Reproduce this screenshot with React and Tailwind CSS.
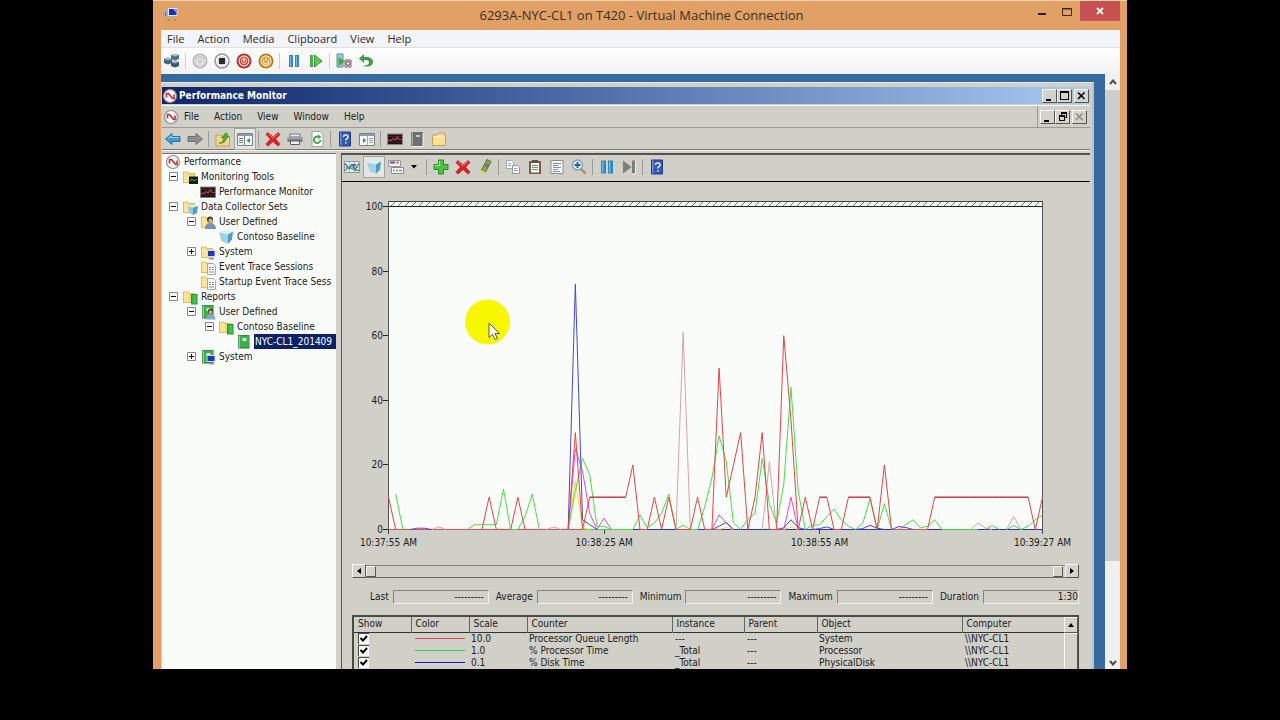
import { useState } from "react";

const Svg = ({ children, className = "w-4 h-4 shrink-0" }) => (
    <svg viewBox="0 0 16 16" className={className} aria-hidden="true">
        {children}
    </svg>
);

/* ---------- shared icon parts ---------- */

const FolderShape = () => (
    <>
        <path d="M1 2.500h5l1 1.500h6v10H1z" fill="#e3bd5c" />
        <path d="M2 3.500h3.600l1 1.500H12v8H2z" fill="#f8e49a" />
        <path d="M7 5h5v8.500H7z" fill="#f3d777" />
    </>
);

const BookShape = () => (
    <>
        <path d="M2 1h11.500v13.500H2z" fill="#1f7a31" />
        <path d="M4 1.500h9v12H4z" fill="#3fae4e" />
        <path d="M2.500 1.500h1.500v12.500H2.500z" fill="#8ad193" />
        <path d="M6.500 4h4v3h-4z" fill="#d9f2d6" />
    </>
);

const CubeShape = () => (
    <>
        <path d="M1 3.500l6-2.500 8 1.500-5 3z" fill="#d6eef5" />
        <path d="M1 3.500l9 2V15L3.500 12z" fill="#9fd3e4" />
        <path d="M10 5.500l5-3-1 8-4 4.500z" fill="#4c9fc0" />
    </>
);

const PageLines = () => (
    <>
        <path d="M2 1.500h12v13H2z" fill="#fbfbfb" stroke="#8b8d8f" />
        <path d="M4 4.500h8M4 6.500h5M4 8.500h8M4 10.500h5M4 12.500h7" stroke="#7d93ad" />
    </>
);

const icons = {
    connection: (
        <Svg>
            <path d="M5 1h9.500v8H5z" fill="#dfe6ee" />
            <path d="M6 2h7.500v6H6z" fill="#1c2fb4" />
            <path d="M10 2h3.500v4z" fill="#7f9af0" />
            <path d="M1 4h3v6H1z" fill="#9fb0bd" />
            <path d="M2 5h1v4H2z" fill="#5f7686" />
            <path d="M8 9h3v3H8z" fill="#a8adb2" />
            <path d="M4 13h9" stroke="#c08a2c" strokeWidth="1.500" />
            <path d="M7.500 12h3v2h-3z" fill="#d9b24b" />
        </Svg>
    ),
    ctrlAltDel: (
        <Svg>
            <path d="M7 2l4-1 4 1v4l-4 1.500L7 6z" fill="#4b7389" />
            <path d="M7 2l4 1.500L15 2l-4-1z" fill="#a9c6d3" />
            <path d="M0 6l4-1.500L8 6v4l-4 1.500L0 10z" fill="#3e6479" />
            <path d="M0 6l4 1.500L8 6 4 4.500z" fill="#9dbccb" />
            <path d="M7 9l4-1.500L15 9v4l-4 1.500L7 13z" fill="#35596d" />
            <path d="M7 9l4 1.500L15 9l-4-1.500z" fill="#a3c2cf" />
        </Svg>
    ),
    start: (
        <Svg>
            <circle cx="8" cy="8" r="7.500" fill="#b4b4b4" />
            <circle cx="8" cy="8" r="5.500" fill="#c9c9c9" stroke="#e9e9e9" />
            <path d="M6 6a3 3 0 1 0 4 0M8 4.500v3" fill="none" stroke="#f4f4f4" strokeWidth="1.200" />
        </Svg>
    ),
    turnOff: (
        <Svg>
            <circle cx="8" cy="8" r="7" fill="#fafafa" stroke="#949494" strokeWidth="1.500" />
            <circle cx="8" cy="8" r="5" fill="#dedede" />
            <path d="M5 5h6v6H5z" fill="#2b2b2b" />
        </Svg>
    ),
    shutDown: (
        <Svg>
            <circle cx="8" cy="8" r="7.500" fill="#b32c20" />
            <circle cx="8" cy="8" r="5" fill="#c94434" stroke="#f3cfc8" strokeWidth="1.300" />
            <path d="M8 4.800v4" stroke="#fff" strokeWidth="1.400" />
            <circle cx="8" cy="8" r="2.500" fill="none" stroke="#f3cfc8" />
        </Svg>
    ),
    save: (
        <Svg>
            <circle cx="8" cy="8" r="7.500" fill="#b9791c" />
            <circle cx="8" cy="8" r="5" fill="#d79c35" stroke="#f7e2b6" strokeWidth="1.300" />
            <path d="M6 7a2.500 2.500 0 1 0 4 0M8 5v3" fill="none" stroke="#fff4d8" strokeWidth="1.200" />
        </Svg>
    ),
    pause: (
        <Svg>
            <path d="M3 2h4v12H3zM9 2h4v12H9z" fill="#3a86c8" />
            <path d="M4 3h1v10H4zM10 3h1v10h-1z" fill="#7fb6e2" />
        </Svg>
    ),
    resume: (
        <Svg>
            <path d="M2 2h3v12H2z" fill="#4bb04b" />
            <path d="M6.500 2L14 8l-7.500 6z" fill="#62c455" stroke="#3a9a3a" />
        </Svg>
    ),
    snapshot: (
        <Svg>
            <path d="M1 1h6v13H1z" fill="#9fcadb" stroke="#5a8ba0" />
            <path d="M2.500 4L9 8.500 2.500 13z" fill="#3faa3f" />
            <path d="M9 7h6v7H9z" fill="#c9c3bb" stroke="#7b7468" />
            <circle cx="12" cy="10.500" r="1.800" fill="#fff" stroke="#6b4c38" />
        </Svg>
    ),
    revert: (
        <Svg>
            <path d="M6 1L1 5.500 6 10V7.200c4-.6 5.500 1 5 2.800-.5 1.800-3 2.500-6 3 5 1.500 9.500 0 10-3.800C15.400 5.500 11.500 3.400 6 4z" fill="#3f9d45" />
        </Svg>
    ),
    perfLogo: (
        <Svg>
            <circle cx="8" cy="8" r="6.500" fill="#f7f4f4" stroke="#8f8d92" strokeWidth="1.200" />
            <path d="M4.500 9.500V5.500l2 0 4 5h1.500V6.500" fill="none" stroke="#c0303a" strokeWidth="1.600" />
        </Svg>
    ),
    back: (
        <Svg>
            <path d="M.5 8L7 2.500V5.500h8v5H7v3z" fill="#3b9bdc" stroke="#2d6f9f" />
            <path d="M3 7.500L6.500 5v1.500H14" fill="none" stroke="#9ad3f5" />
        </Svg>
    ),
    forward: (
        <Svg>
            <path d="M15.500 8L9 2.500V5.500H1v5h8v3z" fill="#8a8d8f" stroke="#6d6f71" />
        </Svg>
    ),
    upLevel: (
        <Svg>
            <path d="M1 4h5l1 1.500h7.500V15H1z" fill="#f2d98a" stroke="#c4a152" />
            <path d="M4 12c3 0 4.500-2 5-5H6.500L11 1.500 14 6l-2.200.5C11 10.500 8 13 4 12z" fill="#4daf35" stroke="#2d7d22" strokeWidth=".6" />
        </Svg>
    ),
    consoleTree: (
        <Svg>
            <path d="M.5 2.500h15v12H.5z" fill="#f6f8fa" stroke="#7a828c" />
            <path d="M1 3h14v2H1z" fill="#8f9baa" />
            <path d="M2 7.500h4M2 9.500h4M2 11.500h4" stroke="#5f7da6" />
            <path d="M7.500 5v9" stroke="#7a828c" />
            <path d="M13 7v5l-3.500-2.500z" fill="#2f9a3a" />
        </Svg>
    ),
    actionPane: (
        <Svg>
            <path d="M.5 2.500h15v12H.5z" fill="#f6f8fa" stroke="#7a828c" />
            <path d="M1 3h14v2H1z" fill="#8f9baa" />
            <path d="M10 7.500h4M10 9.500h4M10 11.500h4" stroke="#8fa1b8" />
            <path d="M8.500 5v9" stroke="#a4abb3" />
            <path d="M4 7v5l3-2.500z" fill="#2f9a3a" />
        </Svg>
    ),
    remove: (
        <Svg>
            <path d="M3 1l5 4.500L13 1l2.500 2.500L11 8l4.500 5-2.500 2.500L8 11l-5 4.500L.5 13 5 8 .5 3.500z" fill="#d42427" />
            <path d="M3 2.500l5 4.500 5-4.500" fill="none" stroke="#f07f7b" />
        </Svg>
    ),
    printer: (
        <Svg>
            <path d="M3 3h10v3H3z" fill="#e8ecef" stroke="#74787c" />
            <path d="M.5 6h15v5H.5z" fill="#7a7f84" />
            <path d="M1 6.500h14v1.500H1z" fill="#a9aeb2" />
            <path d="M3.500 10h9v3.500h-9z" fill="#f2f2f2" stroke="#5d6165" />
        </Svg>
    ),
    refreshPage: (
        <Svg>
            <path d="M3 .5h8l3 3v12H3z" fill="#fbfbfb" stroke="#a0a3a5" />
            <path d="M11.500 9A3.300 3.300 0 1 1 9.500 5.800" fill="none" stroke="#3fa447" strokeWidth="1.800" />
            <path d="M9 3.500l3.500 2.500L9 8z" fill="#3fa447" />
        </Svg>
    ),
    help: (
        <Svg>
            <path d="M2.500 1h11v14h-11z" fill="#3656b8" stroke="#223a8a" />
            <path d="M3 1.500h1.500v13H3z" fill="#6f8be0" />
            <path d="M6.500 6C6.500 3.200 11 3.200 11 6c0 1.800-2.200 1.800-2.200 3.500M8.800 11v1.500" fill="none" stroke="#fff" strokeWidth="1.400" />
        </Svg>
    ),
    perfScreen: (
        <Svg>
            <path d="M0 2.500h16v11.500H0z" fill="#8b8486" />
            <path d="M1 3.500h14v9.500H1z" fill="#1d1416" />
            <path d="M1 5.500h14M1 8.500h14M1 11h14" stroke="#4c3a3d" strokeWidth=".6" />
            <path d="M1 9.500h3l2-2 2 1.500 2.500-3 2 2.500H15" fill="none" stroke="#d2323d" strokeWidth="1.200" />
        </Svg>
    ),
    grayBook: (
        <Svg>
            <path d="M2 1h12v14H2z" fill="#6f6f6f" />
            <path d="M2.500 1.500h1.500v13H2.500z" fill="#a5a5a5" />
            <path d="M7 4h4v2H7z" fill="#c7c7c7" />
            <path d="M14 2v13.500H3" fill="none" stroke="#efefec" />
        </Svg>
    ),
    newFolder: (
        <Svg>
            <path d="M1.500 4h5l1-2h6v2h1v10.500h-13z" fill="#f7e196" stroke="#caa24a" />
            <path d="M2.500 6h11" stroke="#fdf4cd" />
        </Svg>
    ),
    currentActivity: (
        <Svg>
            <path d="M.5 2.500h15v11H.5z" fill="#eef3f7" stroke="#8b97a3" />
            <path d="M5.500 3v10M10.500 3v10M1 8.500h14" stroke="#a9b8c7" />
            <path d="M1 4.500l4 5 3-4 3 5 4-6" fill="none" stroke="#2e67b4" strokeWidth="1.300" />
            <path d="M1 11.500l4-3 5 2 5 1" fill="none" stroke="#3fa447" strokeWidth="1.300" />
            <path d="M9 5h3v2H9z" fill="#c2484c" />
        </Svg>
    ),
    cube: <Svg><CubeShape /></Svg>,
    graphType: (
        <Svg>
            <path d="M.5 1.500h12v6H.5z" fill="#f3f1f5" stroke="#9a98a0" />
            <path d="M2 3.500h5" stroke="#7a4a8a" strokeWidth="2" />
            <path d="M8.500 3.500h2" stroke="#c34d55" strokeWidth="2" />
            <path d="M3.500 8.500h12v6h-12z" fill="#f7f7f7" stroke="#8b8d92" />
            <path d="M5 11.500h2M8 11.500h2M11 11.500h3" stroke="#9aa3ae" strokeWidth="2" />
        </Svg>
    ),
    add: (
        <Svg>
            <path d="M5.500 1h5v4.500H15v5h-4.500V15h-5v-4.500H1v-5h4.500z" fill="#4fc043" stroke="#2b8a2b" />
            <path d="M6.500 2v4.500H2" fill="none" stroke="#a8e69a" />
        </Svg>
    ),
    highlight: (
        <Svg>
            <path d="M10 .5l4 2-5.500 10.500-4-2z" fill="#9aa83c" stroke="#5d6a34" />
            <path d="M9.500 4l3 1.500-2 3.500-3-1.500z" fill="#5a7fa0" />
            <path d="M4.500 11l4 2-4.500 2.500z" fill="#d6da48" />
        </Svg>
    ),
    copy: (
        <Svg>
            <path d="M1.500 1.500h5l2 2v6h-7z" fill="#fafafa" stroke="#a1a9b5" />
            <path d="M7.500 6.500h5l2 2v6h-7z" fill="#fafafa" stroke="#8d9bb0" />
            <path d="M3 4.500h3M3 6.500h3M9 9.500h3M9 11.500h4" stroke="#93a7c4" />
        </Svg>
    ),
    paste: (
        <Svg>
            <path d="M2 2h12v13H2z" fill="#7c5a3a" />
            <path d="M4 4h8v9.500H4z" fill="#fbfbfb" />
            <path d="M5 1h6v2.500H5z" fill="#55514c" />
            <path d="M5 6.500h6M5 8.500h6M5 10.500h6" stroke="#7f8790" />
        </Svg>
    ),
    properties: <Svg><PageLines /></Svg>,
    zoom: (
        <Svg>
            <path d="M9.500 9.500l5 5" stroke="#c08a66" strokeWidth="2.500" />
            <circle cx="6.500" cy="6" r="5" fill="#e2f0fb" stroke="#7d9cc0" strokeWidth="1.300" />
            <path d="M6.500 3v6M3.500 6h6" stroke="#2b5ea8" strokeWidth="2" />
        </Svg>
    ),
    freeze: (
        <Svg>
            <path d="M2 1.500h5v13H2zM9 1.500h5v13H9z" fill="#2d86bd" />
            <path d="M3 2.500h1.500v11H3zM10 2.500h1.500v11H10z" fill="#6fb9e0" />
        </Svg>
    ),
    step: (
        <Svg>
            <path d="M2 1.500L10.500 8 2 14.500zM11 1.500h3v13h-3z" fill="#7c7e7c" />
            <path d="M14.500 2v13H11" fill="none" stroke="#efefec" />
        </Svg>
    ),
    folderPerf: (
        <Svg>
            <FolderShape />
            <path d="M7 7.500h9V15H7z" fill="#13201a" />
            <path d="M8 12l2-2 2 2 3-2" fill="none" stroke="#49b04f" />
        </Svg>
    ),
    folderCube: (
        <Svg>
            <FolderShape />
            <path d="M6 7l5-1 5 1-5 1.800z" fill="#d6eef5" />
            <path d="M6 7l5 1.800V16l-4-2z" fill="#8fcbe0" />
            <path d="M11 8.800L16 7l-1 7-4 2z" fill="#4c9fc0" />
        </Svg>
    ),
    folderUser: (
        <Svg>
            <FolderShape />
            <circle cx="10" cy="5.500" r="3" fill="#3b3a2c" />
            <circle cx="10.500" cy="6.500" r="2" fill="#d9ad7c" />
            <path d="M5 15c0-4 2-6 5-6s6 2 6 6z" fill="#7d93b3" />
        </Svg>
    ),
    folderSystem: (
        <Svg>
            <FolderShape />
            <path d="M7 6h8.500v7H7z" fill="#d4dae2" />
            <path d="M8 7h6.500v5H8z" fill="#1c37b8" />
            <path d="M9 14h5v1.500H9z" fill="#8f979f" />
        </Svg>
    ),
    folderTrace: (
        <Svg>
            <FolderShape />
            <path d="M7.500 4.500h6l2 2v9h-8z" fill="#f9f9f9" stroke="#a9a9a3" />
            <path d="M9 8.500h2M12 8.500h2M9 10.500h2M12 10.500h2M9 13h5" stroke="#8b8b96" />
        </Svg>
    ),
    folderReport: (
        <Svg>
            <FolderShape />
            <path d="M9 5h6.500v10.500H9z" fill="#1f9a35" />
            <path d="M10.500 6h4v8.500h-4z" fill="#45c052" />
        </Svg>
    ),
    report: <Svg><BookShape /></Svg>,
    reportUser: (
        <Svg>
            <BookShape />
            <circle cx="10.500" cy="7" r="2.500" fill="#4a3a2a" />
            <circle cx="10.500" cy="8" r="1.700" fill="#d9ad7c" />
            <path d="M6 15.500c0-4 2-5 4.500-5s5 1 5 5z" fill="#8ba4c6" />
        </Svg>
    ),
    reportSystem: (
        <Svg>
            <BookShape />
            <path d="M6.500 6h9v7h-9z" fill="#d4dae2" />
            <path d="M7.500 7h7v5h-7z" fill="#1c37b8" />
            <path d="M9 14h5v1.500H9z" fill="#8f979f" />
        </Svg>
    ),
};

/* ---------- toolbars ---------- */

const Divider = ({ className }) => <span className={`-ml-px w-px h-4 shrink-0 ${className}`} />;

function ToolBar({ label, items, className, divider }) {
    return (
        <div role="toolbar" aria-label={label} className={`flex items-center gap-1.5 ${className}`}>
            {items.map((item, i) => {
                if (item === "|") return <Divider key={i} className={divider} />;
                if (item === "v") {
                    return (
                        <button key={i} type="button" aria-label="Graph type list" className="-ml-px w-3 h-4 pl-0.5">
                            <svg viewBox="0 0 6 4" className="w-1.5 h-1"><path d="M0 0h6L3 3.500z" /></svg>
                        </button>
                    );
                }
                const pressed = item.startsWith("*");
                const name = pressed ? item.slice(1) : item;
                return (
                    <button
                        key={i}
                        type="button"
                        aria-label={name}
                        aria-pressed={pressed}
                        className={
                            pressed
                                ? "bg-[#e4e6e3] ring-2 ring-[#e4e6e3] outline-1 outline-offset-2 outline-[#a3a49d]"
                                : ""
                        }
                    >
                        {icons[name]}
                    </button>
                );
            })}
        </div>
    );
}

function MenuBar({ items, className }) {
    return (
        <nav className={`flex items-center ${className}`}>
            {items.map((item) => (
                <button key={item} type="button">{item}</button>
            ))}
        </nav>
    );
}

const vmTools = ["ctrlAltDel", "|", "start", "turnOff", "shutDown", "save", "|", "pause", "resume", "|", "snapshot", "revert"];
const consoleTools = ["back", "forward", "|", "upLevel", "*consoleTree", "|", "remove", "printer", "refreshPage", "|", "help", "actionPane", "|", "perfScreen", "grayBook", "newFolder"];
const graphTools = ["currentActivity", "*cube", "graphType", "v", "|", "add", "remove", "highlight", "|", "copy", "paste", "properties", "zoom", "|", "freeze", "step", "|", "help"];

const raised = "bg-[#d4d3cb] border border-t-[#f6f6f2] border-l-[#f6f6f2] border-b-[#55554f] border-r-[#55554f]";
const sunken = "border border-t-[#85857d] border-l-[#85857d] border-b-[#f4f4ef] border-r-[#f4f4ef]";

const captionGlyphs = {
    Minimize: <path d="M3 9h5v2H3z" />,
    Maximize: <path d="M2 1h9v9H2zM3 3v6h7V3z" fillRule="evenodd" />,
    Restore: <path d="M5 1h6v6H9v3H3V4h2zM6 3v1h3v2h1V3zM4 6v3h4V6z" fillRule="evenodd" />,
    Close: <path d="M3 2.500l6.500 6.500M9.500 2.500L3 9" stroke="currentColor" strokeWidth="1.600" />,
};

function CaptionButton({ name, disabled }) {
    return (
        <button
            type="button"
            aria-label={name}
            disabled={disabled}
            className={`w-[15px] h-[14px] ${raised} ${name === "Close" ? "ml-0.5" : ""} ${disabled ? "text-[#8d8d85]" : "text-black"}`}
        >
            <svg viewBox="0 0 13 12" className="w-full h-full" fill="currentColor">{captionGlyphs[name]}</svg>
        </button>
    );
}

/* ---------- console tree ---------- */

const tree = [
    { level: 0, icon: "perfLogo", text: "Performance" },
    { level: 1, box: "-", icon: "folderPerf", text: "Monitoring Tools" },
    { level: 2, icon: "perfScreen", text: "Performance Monitor" },
    { level: 1, box: "-", icon: "folderCube", text: "Data Collector Sets" },
    { level: 2, box: "-", icon: "folderUser", text: "User Defined" },
    { level: 3, icon: "cube", text: "Contoso Baseline" },
    { level: 2, box: "+", icon: "folderSystem", text: "System" },
    { level: 2, icon: "folderTrace", text: "Event Trace Sessions" },
    { level: 2, icon: "folderTrace", text: "Startup Event Trace Sess" },
    { level: 1, box: "-", icon: "folderReport", text: "Reports" },
    { level: 2, box: "-", icon: "reportUser", text: "User Defined" },
    { level: 3, box: "-", icon: "folderReport", text: "Contoso Baseline" },
    { level: 4, icon: "report", text: "NYC-CL1_201409", selected: true },
    { level: 2, box: "+", icon: "reportSystem", text: "System" },
];

const indents = ["pl-[3px]", "pl-[7px]", "pl-[25px]", "pl-[43px]", "pl-[61px]"];

function TreeRow({ node }) {
    return (
        <li className={`flex items-center h-[15px] whitespace-nowrap ${indents[node.level]}`}>
            {node.level > 0 && (
                <span className="w-[9px] mr-1 shrink-0">
                    {node.box && (
                        <button type="button" aria-label={node.box === "-" ? "Collapse" : "Expand"} className="block">
                            <svg viewBox="0 0 9 9" className="w-[9px] h-[9px]">
                                <path d="M.5.5h8v8h-8z" fill="#fff" stroke="#8a8a8a" />
                                <path d={node.box === "-" ? "M2 4.500h5" : "M2 4.500h5M4.500 2v5"} stroke="#111" />
                            </svg>
                        </button>
                    )}
                </span>
            )}
            {icons[node.icon]}
            <span className={node.selected ? "flex-1 ml-0.5 pl-px h-[15px] leading-[15px] bg-[#0b2268] text-white" : "ml-[3px]"}>
                {node.text}
            </span>
        </li>
    );
}

/* ---------- graph ---------- */

// plot area inside the graph drawing
const LEFT = 46;
const RIGHT = 700;
const TOP = 24;
const BOTTOM = 347;
const SAMPLES = 91;

const px = (i) => LEFT + 0.5 + ((RIGHT - LEFT) * i) / SAMPLES;
const py = (v) => BOTTOM + 0.5 - ((BOTTOM - TOP) * v) / 100;

// each run is [first sample, values...]
const series = [
    {
        color: "#d9a3ab",
        runs: [[6, 0, 0.8, 0], [22, 0, 0.8, 0], [40, 0, 61, 0], [52, 0, 21, 0], [81, 0, 2, 0.5, 0], [86, 0, 4, 0]],
    },
    { color: "#f2e21c", runs: [[25, 0, 15, 0.5, 0], [46, 0, 0.6, 0], [55, 0, 0.7, 0]] },
    {
        color: "#48e048",
        runs: [
            [1, 11, 0],
            [11, 0, 1.5, 1.5, 1.5, 1.5, 12.5, 0, 0, 4, 11, 0],
            [25, 0, 12, 22, 17, 1, 1, 0, 0, 0, 0, 4.5, 0.5, 2, 5, 11, 0, 1.3, 0, 0, 7, 16, 29, 21, 2, 0, 3, 5, 22, 8, 2, 14, 44, 12, 0, 1.3, 1.5, 4, 6.3, 3, 1, 0, 2, 9.5, 0, 8, 0],
            [71, 0, 1.5, 3, 0.5, 1, 3, 0],
            [83, 0, 1.2, 0],
            [86, 0, 1.2, 0, 1, 3, 4.5],
        ],
    },
    { color: "#ee44ee", runs: [[25, 0, 25, 18, 5, 0, 3.5, 0], [45, 0, 4.5, 2, 0], [55, 0, 10, 0]] },
    {
        color: "#4848d4",
        runs: [[3, 0, 0.4, 0.4, 0], [25, 0, 76, 3, 1.5, 0], [45, 0, 1, 2.2, 0], [54, 0, 0.5, 3, 0.6, 0], [59, 0, 0.3, 0.8, 0], [65, 0, 0.3, 1.3, 0.4, 0], [70, 0, 0.9, 0.6, 0]],
    },
    {
        color: "#e6454a",
        runs: [
            [0, 10, 0],
            [13, 0, 10, 0],
            [17, 0, 10, 0],
            [25, 0, 30, 0, 10, 10, 10, 10, 10, 10, 20, 0, 0, 10, 0, 10, 0, 0, 0, 10, 0, 0, 50, 10, 20, 30, 0, 10, 30, 0, 0, 60, 34, 0, 10, 0, 10, 10, 0, 0, 10, 10, 10, 10, 0, 20, 0],
            [75, 0, 10, 10, 10, 10, 10, 10, 10, 10, 10, 10, 10, 10, 10, 10, 0, 10],
        ],
    },
    {
        // level stretches of the queue length
        color: "#b0303a",
        runs: [[28, 10, 10, 10, 10, 10, 10], [60, 10, 10], [64, 10, 10, 10, 10], [76, 10, 10, 10, 10, 10, 10, 10, 10, 10, 10, 10, 10, 10, 10]],
    },
];

// what shows along the zero line: [from sample, to sample, colour]
const baseline = [
    [0, 27, "#ea4a50"],
    [27, 34, "#3fcf3f"],
    [34, 44, "#2f2fd0"],
    [44, 46, "#ea4a50"],
    [46, 53, "#2f2fd0"],
    [53, 55, "#ea4a50"],
    [55, 70, "#2f2fd0"],
    [70, 75, "#ea4a50"],
    [75, 77, "#2f2fd0"],
    [77, 82, "#3fcf3f"],
    [82, 91, "#2f2fd0"],
];

const times = [
    [0, "10:37:55 AM"],
    [30, "10:38:25 AM"],
    [60, "10:38:55 AM"],
    [91, "10:39:27 AM"],
];

function Graph() {
    return (
        <svg viewBox="0 0 748 378" className="block w-full" role="img" aria-label="Counter graph">
            <defs>
                <pattern id="hatch" width="7" height="5" patternUnits="userSpaceOnUse" y="19">
                    <path d="M0 5L5 0" stroke="#4a4a45" strokeWidth=".8" />
                </pattern>
            </defs>
            <rect x={LEFT} y="19" width={RIGHT - LEFT} height={BOTTOM - 19} fill="#fafcf9" />
            <rect x={LEFT} y="19" width={RIGHT - LEFT} height="5" fill="url(#hatch)" />
            <path d={`M${LEFT} 19.500H${RIGHT}`} stroke="#44443f" />
            <path d={`M41 24.500H${RIGHT}`} stroke="#22221f" />
            <path d={`M${LEFT}.5 19V352M${RIGHT}.5 19V352`} stroke="#55554f" />

            {[0, 20, 40, 60, 80, 100].map((v) => (
                <g key={v}>
                    <path d={`M41 ${Math.floor(py(v)) + 0.5}h5`} stroke="#22221f" />
                    <text x="41" y={Math.floor(py(v)) + 4} textAnchor="end" fill="#1c1c1a">{v}</text>
                </g>
            ))}

            {baseline.map(([from, to, color]) => (
                <path key={from} d={`M${px(from)} ${BOTTOM + 0.5}H${px(to)}`} stroke={color} />
            ))}
            {series.map((s) =>
                s.runs.map(([first, ...values]) => (
                    <polyline
                        key={`${s.color}${first}`}
                        points={values.map((v, k) => `${px(first + k)},${py(v)}`).join(" ")}
                        fill="none"
                        stroke={s.color}
                    />
                ))
            )}

            {times.map(([i, label]) => (
                <g key={label}>
                    <path d={`M${Math.floor(px(i)) + 0.5} 348v4`} stroke="#44443f" />
                    <text x={px(i)} y="364" textAnchor="middle" fill="#1c1c1a">{label}</text>
                </g>
            ))}

            <circle cx="145.500" cy="140" r="22.500" fill="#f7f700" />
            <path d="M147 141v14.500l3.500-3 2.500 5 2.500-1-2.500-5h4.500z" fill="#fff" stroke="#5a5a3c" />
        </svg>
    );
}

function TimeSlider() {
    return (
        <div className="flex items-center h-[14px]">
            <button type="button" aria-label="Earlier" className={`w-[14px] h-[14px] flex items-center justify-center ${raised}`}>
                <svg viewBox="0 0 4 6" className="w-1 h-1.5"><path d="M4 0v6L0 3z" /></svg>
            </button>
            <div className="flex-1 flex h-[13px] border-y border-t-[#85857d] border-b-[#6b6b64]">
                <button type="button" aria-label="Range start" className={`w-[10px] ${raised}`} />
                <span className="flex-1" />
                <button type="button" aria-label="Range end" className={`w-[10px] mr-0.5 ${raised}`} />
            </div>
            <button type="button" aria-label="Later" className={`w-[14px] h-[14px] flex items-center justify-center ${raised}`}>
                <svg viewBox="0 0 4 6" className="w-1 h-1.5"><path d="M0 0v6l4-3z" /></svg>
            </button>
        </div>
    );
}

const stats = [
    ["Last", "---------"],
    ["Average", "---------"],
    ["Minimum", "---------"],
    ["Maximum", "---------"],
    ["Duration", "1:30"],
];

function StatBar() {
    return (
        <dl className="flex justify-between pl-[18px]">
            {stats.map(([label, value]) => (
                <div key={label} className="flex items-center gap-1">
                    <dt>{label}</dt>
                    <dd className={`w-24 h-[14px] leading-3 text-right ${value === "1:30" ? "" : "pr-1"} ${sunken}`}>{value}</dd>
                </div>
            ))}
        </dl>
    );
}

const columns = [
    ["Show", "w-[57px]"],
    ["Color", "w-[58px]"],
    ["Scale", "w-[58px]"],
    ["Counter", "w-[145px]"],
    ["Instance", "w-[72px]"],
    ["Parent", "w-[73px]"],
    ["Object", "w-[145px]"],
    ["Computer", ""],
];

const counters = [
    { line: "bg-[#e0484c]", scale: "10.0", counter: "Processor Queue Length", instance: "---", object: "System" },
    { line: "bg-[#35d035]", scale: "1.0", counter: "% Processor Time", instance: "_Total", object: "Processor" },
    { line: "bg-[#1515b8]", scale: "0.1", counter: "% Disk Time", instance: "_Total", object: "PhysicalDisk" },
];

function CounterTable() {
    const [shown, setShown] = useState([true, true, true]);

    const toggle = (index) => {
        setShown(shown.map((value, i) => (i === index ? !value : value)));
    };

    return (
        <div className="flex h-[70px] border-t-2 border-l-2 border-r border-t-[#4a4a45] border-l-[#4a4a45] border-r-[#4a4a45] overflow-hidden">
            <div className="flex-1">
                <table className="w-full table-fixed border-collapse">
                    <thead>
                        <tr className="h-[15px] border-b border-[#33332f]">
                            {columns.map(([name, width], i) => (
                                <th
                                    key={name}
                                    className={`${width} p-0 pl-1 text-left font-normal leading-[14px] ${i < 7 ? "border-r border-[#66665f]" : ""}`}
                                >
                                    {name}
                                </th>
                            ))}
                        </tr>
                    </thead>
                    <tbody>
                        {counters.map((row, i) => (
                            <tr key={row.counter} className="h-3 leading-3">
                                <td className="p-0 pl-1">
                                    <label className="grid w-[11px] h-[11px]">
                                        <input
                                            type="checkbox"
                                            aria-label={`Show ${row.counter}`}
                                            checked={shown[i]}
                                            onChange={() => toggle(i)}
                                            className="peer appearance-none col-start-1 row-start-1 w-[11px] h-[11px] bg-[#fbfbfb] border-t border-l border-[#4a4a45]"
                                        />
                                        <svg viewBox="0 0 11 11" className="invisible peer-checked:visible pointer-events-none col-start-1 row-start-1 w-[11px] h-[11px]">
                                            <path d="M2.500 5l2.500 2.500L9 3" fill="none" stroke="#000" strokeWidth="2" />
                                        </svg>
                                    </label>
                                </td>
                                <td className="p-0 pl-1">
                                    <span className={`block w-[50px] h-px ${row.line}`} />
                                </td>
                                <td className="p-0 pl-0.5">{row.scale}</td>
                                <td className="p-0 pl-0.5">{row.counter}</td>
                                <td className="p-0 pl-[3px]">{row.instance}</td>
                                <td className="p-0 pl-[3px]">{row.parent || "---"}</td>
                                <td className="p-0 pl-0.5">{row.object}</td>
                                <td className="p-0 pl-[3px]">{"\\\\NYC-CL1"}</td>
                            </tr>
                        ))}
                    </tbody>
                </table>
            </div>
            <div className="flex flex-col w-[14px]">
                <button type="button" aria-label="Scroll up" className={`h-4 flex items-center justify-center ${raised}`}>
                    <svg viewBox="0 0 6 4" className="w-1.5 h-1"><path d="M0 4h6L3 0z" /></svg>
                </button>
                <div className={`flex-1 ${raised}`} />
            </div>
        </div>
    );
}

/* ---------- windows ---------- */

function PerformanceMonitor() {
    return (
        <section className="flex-1 min-h-0 mt-2 mr-[11px] pt-1 pl-px pr-0.5 flex flex-col bg-[#d0cfc8] border-r-2 border-r-[#b9c3cc] border-t border-t-[#e6ebee] font-['DejaVu_Sans_Condensed','DejaVu_Sans',sans-serif] text-[10px] text-[#1c1c1a]">
            <header className="flex items-center h-[17px] pr-px bg-linear-to-r from-[#10256b] to-[#a9caf2]">
                {icons.perfLogo}
                <h2 className="ml-px flex-1 font-bold text-white">Performance Monitor</h2>
                <CaptionButton name="Minimize" />
                <CaptionButton name="Maximize" />
                <CaptionButton name="Close" />
            </header>

            <div className="flex h-[23px] mt-px border-t border-[#f6f6f2]">
                <div className="flex-1 flex items-center pl-px border-b border-[#9b9b93]">
                    {icons.perfLogo}
                    <MenuBar items={["File", "Action", "View", "Window", "Help"]} className="ml-[5px] gap-[15px]" />
                </div>
                <div className="flex items-center pl-0.5 pr-[3px] border-l border-b border-[#9b9b93]">
                    <CaptionButton name="Minimize" />
                    <CaptionButton name="Restore" />
                    <CaptionButton name="Close" disabled />
                </div>
            </div>

            <ToolBar
                label="Console"
                items={consoleTools}
                divider="bg-[#9b9b93]"
                className="h-[22px] pl-[3px] border-b border-[#77776f]"
            />

            <div className="flex-1 min-h-0 flex gap-[5px] pt-0.5 border-t border-[#f6f6f2]">
                <ul className="w-[174px] shrink-0 overflow-hidden bg-[#fafcf9] border-t border-[#77776f]">
                    {tree.map((node, i) => (
                        <TreeRow key={i} node={node} />
                    ))}
                </ul>

                <div className="flex-1 min-w-0 border-t-2 border-l border-[#55554f]">
                    <ToolBar
                        label="Graph"
                        items={graphTools}
                        divider="bg-[#9b9b93]"
                        className="h-[27px] pl-0.5 pb-0.5 border-b border-black"
                    />
                    <Graph />
                    <div className="flex flex-col gap-[11px] pl-[10px] pr-[11px] pt-1">
                        <TimeSlider />
                        <StatBar />
                        <CounterTable />
                    </div>
                </div>
            </div>
        </section>
    );
}

function HostScrollbar() {
    return (
        <div className="w-[15px] shrink-0 flex flex-col bg-[#f0f0f0]">
            <button type="button" aria-label="Scroll up" className="h-4 flex items-center justify-center">
                <svg viewBox="0 0 8 6" className="w-2 h-1.5" fill="none" stroke="#4d4d4d" strokeWidth="2"><path d="M1 5l3-3.500L7 5" /></svg>
            </button>
            <div className="flex-1 flex flex-col">
                <div className="h-[83%] bg-[#cdcdcd]" />
            </div>
            <button type="button" aria-label="Scroll down" className="h-3 flex items-center justify-center">
                <svg viewBox="0 0 8 6" className="w-2 h-1.5" fill="none" stroke="#4d4d4d" strokeWidth="2"><path d="M1 1l3 3.500L7 1" /></svg>
            </button>
        </div>
    );
}

function App() {
    return (
        <div className="h-screen flex flex-col bg-black px-[153px] pb-[51px]">
            <main className="flex-1 min-h-0 flex flex-col bg-[#e0a066] border-t border-[#f0d3b2] pl-2 pr-[7px] font-['Open_Sans','Noto_Sans',sans-serif] overflow-hidden">
                <header className="flex h-[29px] shrink-0 items-start">
                    <span className="pl-0.5 pt-1.5">{icons.connection}</span>
                    <h1 className="flex-1 self-center text-center text-[13px] text-[#3f2d1e] pl-[75px]">
                        6293A-NYC-CL1 on T420 - Virtual Machine Connection
                    </h1>
                    <button type="button" aria-label="Minimize window" className="w-[25px] h-[20px] flex justify-center">
                        <svg viewBox="0 0 10 20" className="w-[10px] h-5"><path d="M1 12h8v2H1z" fill="#2a1c10" /></svg>
                    </button>
                    <button type="button" aria-label="Maximize window" className="w-[26px] h-[20px] flex justify-center">
                        <svg viewBox="0 0 10 20" className="w-[10px] h-5"><path d="M.5 7.500h9v7h-9zM0 8h10" fill="none" stroke="#3d2a18" /></svg>
                    </button>
                    <button type="button" aria-label="Close window" className="w-10 h-[20px] flex justify-center items-center bg-[#c75050]">
                        <svg viewBox="0 0 8 8" className="w-2 h-2"><path d="M1 1l6 6M7 1L1 7" stroke="#fff" strokeWidth="1.800" /></svg>
                    </button>
                </header>

                <MenuBar
                    items={["File", "Action", "Media", "Clipboard", "View", "Help"]}
                    className="h-[18px] shrink-0 pt-px pl-1.5 gap-[13px] bg-[#f3f4f9] border-b border-[#dfe1e6] text-[11px] text-[#2a2a2a]"
                />
                <ToolBar
                    label="Virtual machine"
                    items={vmTools}
                    divider="bg-[#cfcfd2]"
                    className="h-[26px] shrink-0 pl-[3px] bg-linear-to-b from-white to-[#f3f1f3]"
                />

                <div className="flex-1 min-h-0 flex">
                    <div className="flex-1 min-w-0 flex flex-col bg-[#376a9f] overflow-hidden">
                        <PerformanceMonitor />
                    </div>
                    <HostScrollbar />
                </div>
            </main>
        </div>
    );
}

export default App;
